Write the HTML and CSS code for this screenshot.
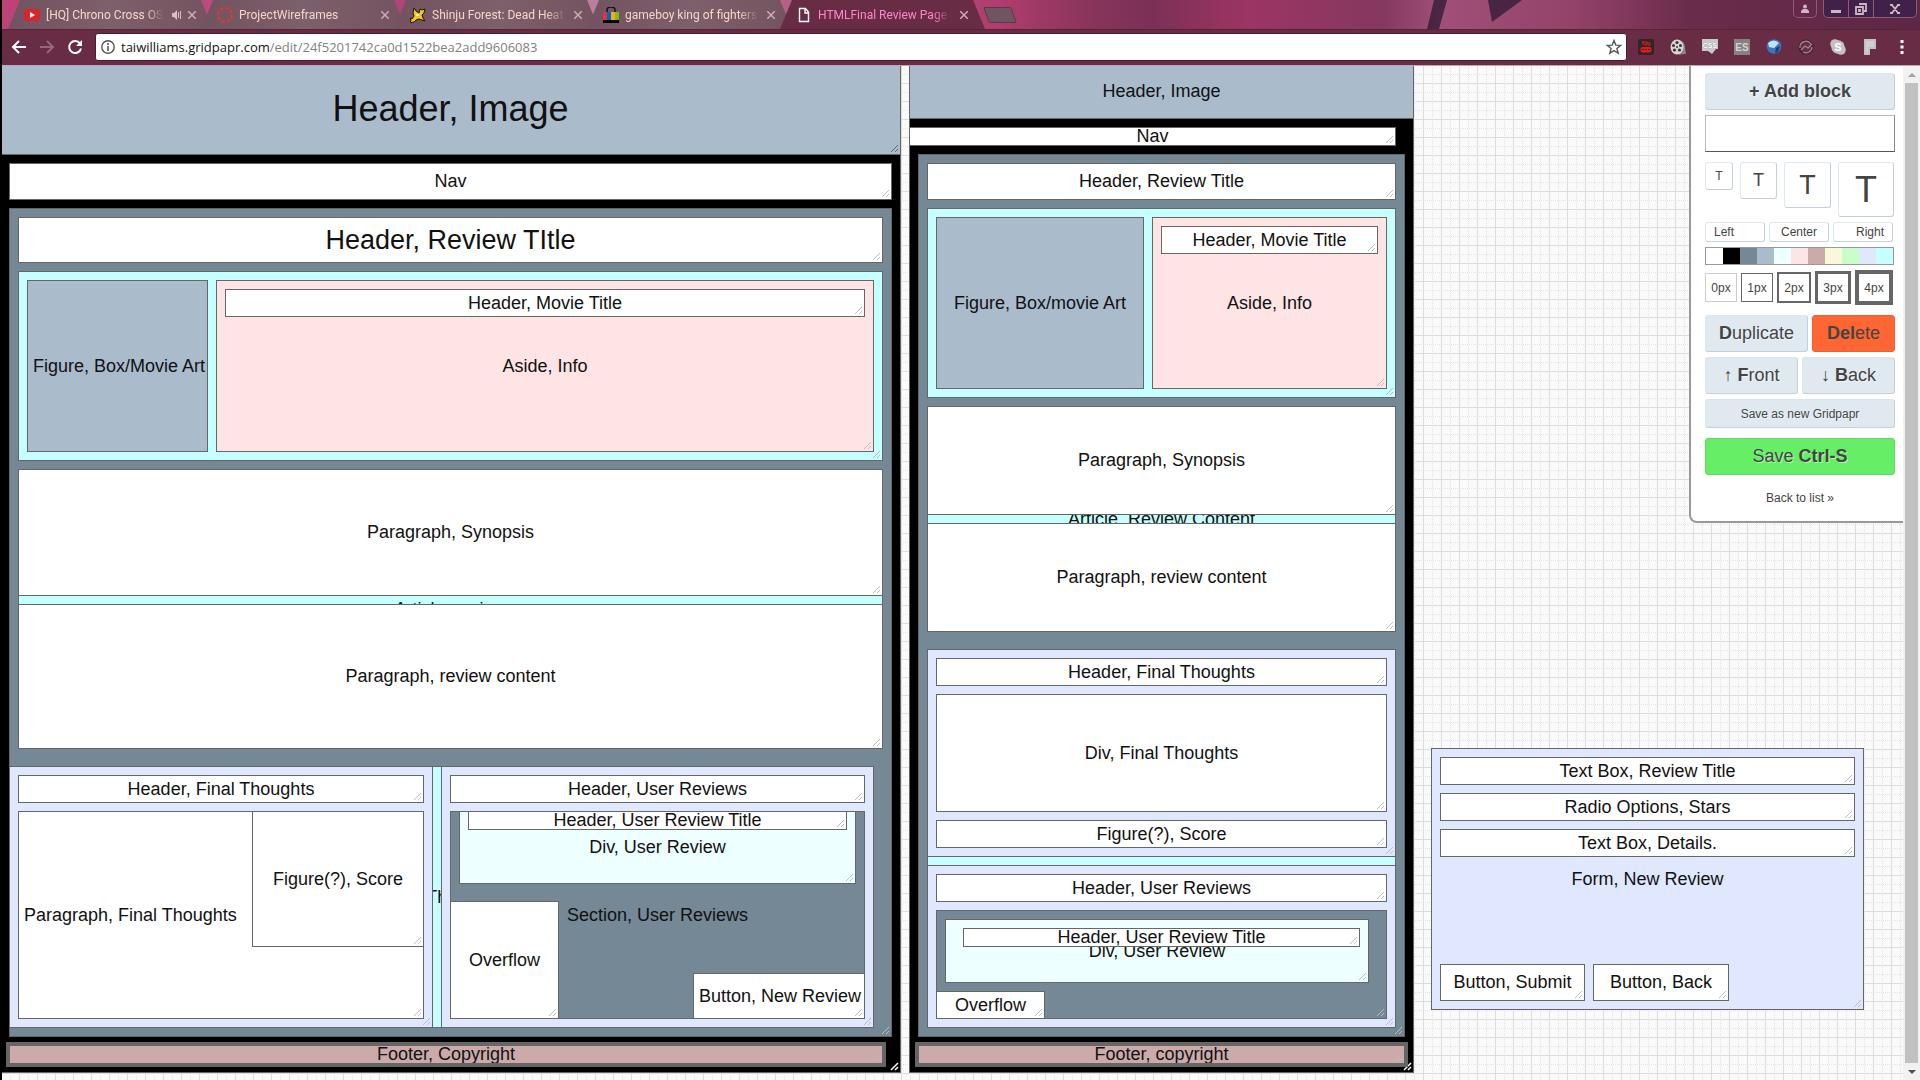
FILE: index.html
```html
<!DOCTYPE html>
<html lang="en">
<head>
<meta charset="utf-8">
<title>HTMLFinal Review Page | Gridpapr</title>
<link rel="stylesheet" href="styles.css">
</head>
<body>
<header class="browser">
  <div class="tabstrip">
    <svg class="theme-art" width="400" height="29" viewBox="0 0 400 29" aria-hidden="true"><path d="M32 0h13l-8 29H25zM86 0h34l-30 22z" fill="#351c38" opacity=".8"/></svg>
    <nav class="tabs" aria-label="Tabs">
      <div class="tab">
        <svg class="favicon" viewBox="0 0 16 16"><rect y="2" width="16" height="12" rx="3" fill="#d9252a"/><path d="M6 5l5 3-5 3z" fill="#fff"/></svg>
        <a class="tab-title" href="#">[HQ] Chrono Cross OST</a>
        <svg class="audio" width="10" height="10" viewBox="0 0 10 10"><path d="M0 3h2l3-3v10L2 7H0z" fill="#d8bfc0"/><path d="M6.500 2v6M8.500 1v8" stroke="#d8bfc0"/></svg>
        <button class="close" aria-label="Close tab"><svg viewBox="0 0 8 8"><path d="M0 0l8 8M8 0L0 8"/></svg></button>
      </div>
      <div class="tab">
        <svg class="favicon" viewBox="0 0 16 16"><circle cx="8" cy="8" r="7" fill="none" stroke="#e8382c" stroke-width="2" stroke-dasharray="3.500 2"/></svg>
        <a class="tab-title" href="#">ProjectWireframes</a>
        <button class="close" aria-label="Close tab"><svg viewBox="0 0 8 8"><path d="M0 0l8 8M8 0L0 8"/></svg></button>
      </div>
      <div class="tab">
        <svg class="favicon" viewBox="0 0 16 16"><path d="M4 1l2 3 3 2 1-4 2 1 3-1-1 4-2 2 1 3 2 3-3-1-3-1-3 1-2 2-5 1 2-2-1-3 2 1 2-3-1-3z" fill="#f2c81e" stroke="#1c1408" stroke-width="1"/><path d="M6 7h3v2H6z" fill="#fff6c0"/></svg>
        <a class="tab-title" href="#">Shinju Forest: Dead Heat</a>
        <button class="close" aria-label="Close tab"><svg viewBox="0 0 8 8"><path d="M0 0l8 8M8 0L0 8"/></svg></button>
      </div>
      <div class="tab">
        <svg class="favicon" viewBox="0 0 16 16"><path d="M4 5V3q0-3 4-3t4 3v2" fill="none" stroke="#111" stroke-width="1.500"/><path d="M0 5h4v8H0z" fill="#e53238"/><path d="M4 5h4v8H4z" fill="#0064d2"/><path d="M8 5h4v8H8z" fill="#f5af02"/><path d="M12 5h4v8h-4z" fill="#86b817"/><path d="M0 13h16v3H0z" fill="#000"/></svg>
        <a class="tab-title" href="#">gameboy king of fighters</a>
        <button class="close" aria-label="Close tab"><svg viewBox="0 0 8 8"><path d="M0 0l8 8M8 0L0 8"/></svg></button>
      </div>
      <div class="tab tab-active">
        <svg class="favicon" viewBox="0 0 16 16"><path d="M3.500 1.500h6l3 3.500v9.500h-9zM9 1.500V6h3.500" fill="none" stroke="#fff" stroke-width="1.400"/></svg>
        <a class="tab-title" href="#" aria-current="page">HTMLFinal Review Page | Grid</a>
        <button class="close" aria-label="Close tab"><svg viewBox="0 0 8 8"><path d="M0 0l8 8M8 0L0 8"/></svg></button>
      </div>
      <button class="new-tab" aria-label="New tab"></button>
    </nav>
    <div class="window-controls">
      <button class="profile" aria-label="Profile"><svg width="10" height="10" viewBox="0 0 10 10"><circle cx="5" cy="2.500" r="2" fill="#cdb6c4"/><path d="M1 9V7l2-2h4l2 2v2z" fill="#cdb6c4"/></svg></button>
      <div class="window-buttons">
        <button class="win" aria-label="Minimize"><svg width="12" height="12" viewBox="0 0 12 12"><path d="M1 7h10v3H1z" fill="#cdb6c4"/></svg></button>
        <button class="win" aria-label="Restore"><svg width="12" height="12" viewBox="0 0 12 12"><path d="M4 1h7v7H9M1 4h7v7H1zM4 7h1v1H4z" fill="none" stroke="#cdb6c4" stroke-width="1.800"/></svg></button>
        <button class="win win-close" aria-label="Close"><svg width="12" height="12" viewBox="0 0 12 12"><path d="M3 2l6 8M9 2L3 10M1 2h3M8 2h3M1 10h3M8 10h3" stroke="#cdb6c4" stroke-width="1.800"/></svg></button>
      </div>
    </div>
  </div>
  <div class="toolbar">
    <button class="tool" aria-label="Back"><svg width="16" height="16" viewBox="0 0 16 16"><path d="M15 8H2M8 2L2 8l6 6" fill="none" stroke="#fff" stroke-width="2"/></svg></button>
    <button class="tool" aria-label="Forward"><svg width="16" height="16" viewBox="0 0 16 16"><path d="M1 8h13M8 2l6 6-6 6" fill="none" stroke="#95687a" stroke-width="2"/></svg></button>
    <button class="tool" aria-label="Reload"><svg width="16" height="16" viewBox="0 0 16 16"><path d="M13 4.500A6 6 0 1 0 14 9.500" fill="none" stroke="#fff" stroke-width="2"/><path d="M15 1v6H9z" fill="#fff"/></svg></button>
    <div class="omnibox">
      <svg width="14" height="14" viewBox="0 0 14 14" aria-hidden="true"><circle cx="7" cy="7" r="6.200" fill="none" stroke="#555" stroke-width="1.400"/><path d="M7 6v5M7 3v2" stroke="#555" stroke-width="1.600"/></svg>
      <p class="url">taiwilliams.gridpapr.com<span class="url-path">/edit/24f5201742ca0d1522bea2add9606083</span></p>
      <button class="star" aria-label="Bookmark"><svg width="16" height="16" viewBox="0 0 16 16"><path d="M8 1.500l1.800 4.600 4.900.3-3.800 3.100 1.300 4.800L8 11.600l-4.200 2.700 1.300-4.800L1.300 6.400l4.900-.3z" fill="none" stroke="#555" stroke-width="1.400"/></svg></button>
    </div>
    <div class="extensions">
      <button class="ext" aria-label="Video downloader"><svg viewBox="0 0 16 16"><rect width="16" height="16" rx="2" fill="#2c2729"/><path d="M4 2l1 2 1-2M5 4v2M7 3h2v3H7zM10 3v3h2V3" fill="none" stroke="#e01b1b"/><rect x="2.500" y="8" width="11" height="5.500" rx="2" fill="#e01b1b"/><path d="M4 10.500h8" stroke="#5c1010" stroke-dasharray="2 1"/></svg></button>
      <button class="ext" aria-label="Film reel"><svg viewBox="0 0 16 16"><path d="M9 1q6 1 6 8l1 6h-3L9 16z" fill="#8d8688"/><ellipse cx="7" cy="8" rx="6.500" ry="7.500" fill="#d9d5d3"/><g fill="#3c3436"><circle cx="7" cy="3.500" r="1.600"/><circle cx="3.500" cy="6.500" r="1.500"/><circle cx="10.500" cy="6.500" r="1.500"/><circle cx="4.500" cy="11" r="1.600"/><circle cx="9.500" cy="11" r="1.600"/><circle cx="7" cy="8" r="1"/></g></svg></button>
      <button class="ext" aria-label="CSS viewer"><svg viewBox="0 0 16 16"><path d="M0 0h16v10h-2l-4 5-4-3H0z" fill="#c9c6c8"/><text x="8" y="9" text-anchor="middle" class="ext-css">CSS</text></svg></button>
      <button class="ext" aria-label="ES"><svg viewBox="0 0 16 16"><rect width="16" height="16" fill="#868284"/><text x="8" y="12" text-anchor="middle" class="ext-es">ES</text></svg></button>
      <button class="ext" aria-label="Globe"><svg viewBox="0 0 16 16"><circle cx="8" cy="7.500" r="7.300" fill="#3d74bd"/><path d="M2 4q6-5 11 0l-5 5-5-1z" fill="#c3e2f8"/><path d="M10 9l4-2-2 6-3 1z" fill="#173f84"/></svg></button>
      <button class="ext" aria-label="Swirl"><svg viewBox="0 0 16 16"><circle cx="8" cy="8" r="6.500" fill="none" stroke="#37262c" stroke-width="2"/><path d="M2 9a6 6 0 0 1 11-4M3 11l4-4 3 2 4-4M14 8a6 6 0 0 1-9 5" fill="none" stroke="#a3898f" stroke-width="1.200"/></svg></button>
      <button class="ext" aria-label="Skype"><svg viewBox="0 0 16 16"><circle cx="5" cy="5" r="4.800" fill="#c4bfc1"/><circle cx="11" cy="11" r="4.800" fill="#c4bfc1"/><circle cx="8" cy="8" r="6.700" fill="#c4bfc1"/><text x="8" y="12" text-anchor="middle" class="ext-skype">S</text></svg></button>
      <button class="ext" aria-label="Flag"><svg viewBox="0 0 16 16"><path d="M2 0h12v10H8v6H2z" fill="#c4c0c2"/><path d="M4 2h8v6H6v6H4z" fill="#d2ced0"/></svg></button>
      <button class="ext" aria-label="Menu"><svg viewBox="0 0 16 16"><path d="M6.500 1h3v3h-3zM6.500 6.500h3v3h-3zM6.500 12h3v3h-3z" fill="#fff"/></svg></button>
    </div>
  </div>
</header>

<main class="workspace">
  <section class="canvas" aria-label="Wireframe canvas">
    <!-- Desktop layout: --x, --y, --w and --h count 9px grid cells -->
    <div class="block black" style="--x:0;--y:0;--w:100;--h:112"></div>
    <div class="block steel text-xl" style="--x:0;--y:0;--w:100;--h:10">Header, Image</div>
    <div class="block" style="--x:1;--y:11;--w:98;--h:4">Nav</div>
    <div class="block slate" style="--x:1;--y:16;--w:98;--h:92"></div>
    <div class="block text-l" style="--x:2;--y:17;--w:96;--h:5">Header, Review TItle</div>
    <div class="block cyan" style="--x:2;--y:23;--w:96;--h:21"></div>
    <div class="block steel left" style="--x:3;--y:24;--w:20;--h:19">Figure, Box/Movie Art</div>
    <div class="block pink" style="--x:24;--y:24;--w:73;--h:19">Aside, Info</div>
    <div class="block" style="--x:25;--y:25;--w:71;--h:3">Header, Movie Title</div>
    <div class="block cyan" style="--x:2;--y:45;--w:96;--h:31">Article, review</div>
    <div class="block" style="--x:2;--y:45;--w:96;--h:14">Paragraph, Synopsis</div>
    <div class="block" style="--x:2;--y:60;--w:96;--h:16">Paragraph, review content</div>
    <div class="block cyan" style="--x:1;--y:78;--w:96;--h:29">Article, Thoughts...</div>
    <div class="block lavender" style="--x:1;--y:78;--w:47;--h:29"></div>
    <div class="block" style="--x:2;--y:79;--w:45;--h:3">Header, Final Thoughts</div>
    <div class="block left" style="--x:2;--y:83;--w:45;--h:23">Paragraph, Final Thoughts</div>
    <div class="block" style="--x:28;--y:83;--w:19;--h:15">Figure(?), Score</div>
    <div class="block lavender" style="--x:49;--y:78;--w:48;--h:29"></div>
    <div class="block" style="--x:50;--y:79;--w:46;--h:3">Header, User Reviews</div>
    <div class="block slate" style="--x:50;--y:83;--w:46;--h:23">Section, User Reviews</div>
    <div class="block mint" style="--x:51;--y:83;--w:44;--h:8">Div, User Review</div>
    <div class="block" style="--x:52;--y:83;--w:42;--h:2">Header, User Review Title</div>
    <div class="block" style="--x:50;--y:93;--w:12;--h:13">Overflow</div>
    <div class="block left" style="--x:77;--y:101;--w:19;--h:5">Button, New Review</div>
    <div class="block rose thick" style="--x:1;--y:109;--w:97;--h:2">Footer, Copyright</div>

    <!-- Tablet layout -->
    <div class="block black" style="--x:101;--y:0;--w:56;--h:112"></div>
    <div class="block steel" style="--x:101;--y:0;--w:56;--h:6">Header, Image</div>
    <div class="block" style="--x:101;--y:7;--w:54;--h:2">Nav</div>
    <div class="block slate" style="--x:102;--y:10;--w:54;--h:98"></div>
    <div class="block" style="--x:103;--y:11;--w:52;--h:4">Header, Review Title</div>
    <div class="block cyan" style="--x:103;--y:16;--w:52;--h:21"></div>
    <div class="block steel" style="--x:104;--y:17;--w:23;--h:19">Figure, Box/movie Art</div>
    <div class="block pink" style="--x:128;--y:17;--w:26;--h:19">Aside, Info</div>
    <div class="block" style="--x:129;--y:18;--w:24;--h:3">Header, Movie Title</div>
    <div class="block cyan" style="--x:103;--y:38;--w:52;--h:25">Article, Review Content</div>
    <div class="block" style="--x:103;--y:38;--w:52;--h:12">Paragraph, Synopsis</div>
    <div class="block" style="--x:103;--y:51;--w:52;--h:12">Paragraph, review content</div>
    <div class="block cyan" style="--x:103;--y:65;--w:52;--h:42"></div>
    <div class="block lavender" style="--x:103;--y:65;--w:52;--h:23"></div>
    <div class="block" style="--x:104;--y:66;--w:50;--h:3">Header, Final Thoughts</div>
    <div class="block" style="--x:104;--y:70;--w:50;--h:13">Div, Final Thoughts</div>
    <div class="block" style="--x:104;--y:84;--w:50;--h:3">Figure(?), Score</div>
    <div class="block lavender" style="--x:103;--y:89;--w:52;--h:18"></div>
    <div class="block" style="--x:104;--y:90;--w:50;--h:3">Header, User Reviews</div>
    <div class="block slate" style="--x:104;--y:94;--w:50;--h:12"></div>
    <div class="block mint" style="--x:105;--y:95;--w:47;--h:7">Div, User Review</div>
    <div class="block" style="--x:107;--y:96;--w:44;--h:2">Header, User Review Title</div>
    <div class="block" style="--x:104;--y:103;--w:12;--h:3">Overflow</div>
    <div class="block rose thick" style="--x:102;--y:109;--w:54;--h:2">Footer, copyright</div>

    <!-- New review form -->
    <div class="block lavender" style="--x:159;--y:76;--w:48;--h:29">Form, New Review</div>
    <div class="block" style="--x:160;--y:77;--w:46;--h:3">Text Box, Review Title</div>
    <div class="block" style="--x:160;--y:81;--w:46;--h:3">Radio Options, Stars</div>
    <div class="block" style="--x:160;--y:85;--w:46;--h:3">Text Box, Details.</div>
    <div class="block" style="--x:160;--y:100;--w:16;--h:4">Button, Submit</div>
    <div class="block" style="--x:177;--y:100;--w:15;--h:4">Button, Back</div>
  </section>

  <aside class="panel" aria-label="Block tools">
    <button class="btn add"><b>+ Add block</b></button>
    <input class="block-text" type="text" aria-label="Block text">
    <div class="row sizes">
      <button class="opt size-s">T</button>
      <button class="opt size-m">T</button>
      <button class="opt size-l">T</button>
      <button class="opt size-xl">T</button>
    </div>
    <div class="row aligns">
      <button class="opt align-left">Left</button>
      <button class="opt">Center</button>
      <button class="opt align-right">Right</button>
    </div>
    <div class="swatches">
      <button class="swatch" aria-label="White"></button>
      <button class="swatch black" aria-label="Black"></button>
      <button class="swatch slate" aria-label="Slate"></button>
      <button class="swatch steel" aria-label="Steel"></button>
      <button class="swatch mint" aria-label="Mint"></button>
      <button class="swatch pink" aria-label="Pink"></button>
      <button class="swatch rose" aria-label="Rose"></button>
      <button class="swatch cream" aria-label="Cream"></button>
      <button class="swatch green" aria-label="Green"></button>
      <button class="swatch lavender" aria-label="Lavender"></button>
      <button class="swatch cyan" aria-label="Cyan"></button>
    </div>
    <div class="row borders">
      <button class="edge edge-0">0px</button>
      <button class="edge edge-1">1px</button>
      <button class="edge edge-2">2px</button>
      <button class="edge edge-3">3px</button>
      <button class="edge edge-4">4px</button>
    </div>
    <div class="row actions">
      <button class="btn duplicate"><b>D</b>uplicate</button>
      <button class="btn delete"><b>Del</b>ete</button>
    </div>
    <div class="row actions">
      <button class="btn half">↑ <b>F</b>ront</button>
      <button class="btn half">↓ <b>B</b>ack</button>
    </div>
    <button class="btn save-as">Save as new Gridpapr</button>
    <button class="btn save">Save <b>Ctrl-S</b></button>
    <a class="back-link" href="#">Back to list »</a>
  </aside>

  <div class="scrollbar" aria-hidden="true">
    <span class="arrow arrow-up"></span>
    <span class="thumb"></span>
    <span class="arrow arrow-down"></span>
  </div>
</main>
</body>
</html>
```
FILE: styles.css
```css
* { box-sizing: border-box; }

body {
  margin: 0;
  height: 100vh;
  display: flex;
  flex-direction: column;
  overflow: hidden;
  border-left: 2px solid #000;
  font-family: "Liberation Sans", Arial, sans-serif;
  color: #444;
}

button { font: inherit; color: inherit; padding: 0; border: 0; background: none; }

/* Browser window */
.browser { font-family: Roboto, sans-serif; }

.tabstrip {
  position: relative;
  display: flex;
  justify-content: space-between;
  height: 29px;
  padding-left: 6px;
  background: linear-gradient(90deg, #bd4376 0, #c04a7e 11%, #b14478 21%, #b9809e 31%, #b03d6e 52%, #86345a 57%, #7c3055 60%, #9c3563 65%, #85385f 72%, #a05078 75%, #934268 82%, #6a2c4b 88%, #5e2745 100%);
}
.theme-art { position: absolute; top: 0; left: 73%; }
.tabs { display: flex; position: relative; }

.tab {
  display: flex;
  align-items: center;
  width: 205px;
  margin-right: -12px;
  padding: 0 17px 0 16px;
  background: linear-gradient(90deg, #725260, #7c606b 50%, #74535f);
  clip-path: polygon(0 100%, 12px 0, calc(100% - 12px) 0, 100% 100%);
  color: #f6d5c8;
}
.tab-active { background: #682c44; color: #ff86cc; }
.favicon { flex: none; width: 16px; height: 16px; margin-right: 6px; }
.tab-title {
  flex: 1;
  overflow: hidden;
  margin-right: 8px;
  color: inherit;
  font-size: 12px;
  line-height: 16px;
  white-space: nowrap;
  text-decoration: none;
  mask-image: linear-gradient(90deg, #000 85%, transparent);
}
.audio { flex: none; margin-right: 6px; }
.close { width: 8px; height: 8px; display: flex; stroke: #cfa9b4; stroke-width: 1.500; }
.close svg { width: 8px; height: 8px; }
.new-tab {
  align-self: center;
  width: 28px;
  height: 16px;
  margin-left: 13px;
  border: 1px solid #5a3a4a;
  border-radius: 2px;
  background: #6f5560;
  transform: skewX(20deg);
}

.window-controls { position: relative; display: flex; gap: 6px; height: 18px; padding-right: 3px; }
.profile, .window-buttons { border: 1px solid #8d5c79; border-top: 0; border-radius: 0 0 5px 5px; }
.profile { width: 24px; }
.window-buttons { display: flex; background: #41204a; overflow: hidden; }
.win { width: 25px; border-right: 1px solid #8d5c79; }
.win-close { width: 42px; border-right: 0; }
.win svg, .profile svg { display: block; margin: auto; }

.toolbar {
  display: flex;
  align-items: center;
  height: 37px;
  padding: 0 10px 2px 9px;
  border-top: 1px solid #56233a;
  border-bottom: 1px solid #c5a3b2;
  background: #682c44;
}
.tool { display: flex; width: 28px; }
.omnibox {
  flex: 1;
  display: flex;
  align-items: center;
  gap: 6px;
  height: 28px;
  padding: 0 4px 0 5px;
  border: 1px solid #4c1c30;
  border-radius: 3px;
  background: #fff;
}
.url { flex: 1; margin: 0; font: 13px/20px "Open Sans", sans-serif; color: #111; }
.url-path { color: #808080; }
.star { display: flex; }
.extensions { display: flex; gap: 16px; padding-left: 11px; }
.ext { display: flex; width: 16px; height: 16px; }
.ext svg { width: 16px; height: 16px; overflow: visible; }
.ext-css { font: bold 7px "Liberation Sans", sans-serif; fill: #fff; stroke: #8c878a; stroke-width: .5px; paint-order: stroke; }
.ext-es { font: bold 10px "Liberation Sans", sans-serif; fill: #d5d2d4; }
.ext-skype { font: bold 11px "Liberation Sans", sans-serif; fill: #fff; }

/* Workspace */
.workspace { position: relative; flex: 1; display: flex; min-height: 0; }

.canvas {
  --cell: 9px;
  position: relative;
  flex: 1;
  overflow: hidden;
  background: #fafafa url("data:image/svg+xml,%3Csvg xmlns='http://www.w3.org/2000/svg' width='18' height='18'%3E%3Cpath d='M0 .5h18M.5 0v18' stroke='%23ddd'/%3E%3Cpath d='M0 9.500h18M9.500 0v18' stroke='%23e2e2e2' stroke-dasharray='1 1'/%3E%3C/svg%3E") -1px -1px;
}

.block {
  position: absolute;
  left: calc(var(--x) * var(--cell) - 2px);
  top: calc(var(--y) * var(--cell) - 2px);
  width: calc(var(--w) * var(--cell) + 1px);
  height: calc(var(--h) * var(--cell) + 1px);
  display: flex;
  align-items: center;
  justify-content: center;
  overflow: hidden;
  resize: both;
  padding-bottom: 1px;
  border: 1px solid #666;
  background-color: #fff;
  color: #111;
  font-size: 18px;
  line-height: 20px;
  white-space: nowrap;
}
.block::-webkit-resizer {
  background: url("data:image/svg+xml,%3Csvg xmlns='http://www.w3.org/2000/svg' width='15' height='15'%3E%3Cpath d='M6 13l7-7M10 13l3-3' stroke='%23bbb'/%3E%3C/svg%3E") no-repeat right bottom;
}
.block.black::-webkit-resizer {
  background-image: url("data:image/svg+xml,%3Csvg xmlns='http://www.w3.org/2000/svg' width='15' height='15'%3E%3Cpath d='M6 13l7-7M10 13l3-3' stroke='%23fff' stroke-width='1.500'/%3E%3C/svg%3E");
}
.block.text-xl::-webkit-resizer {
  background-image: url("data:image/svg+xml,%3Csvg xmlns='http://www.w3.org/2000/svg' width='15' height='15'%3E%3Cpath d='M6 13l7-7M10 13l3-3' stroke='%23666'/%3E%3C/svg%3E");
}
.text-l { font-size: 27px; line-height: 30px; }
.text-xl { font-size: 36px; line-height: 42px; }
.left { justify-content: flex-start; padding-left: 5px; }
.thick { box-shadow: 0 0 0 3px #666; }

.black { background-color: #000; }
.slate { background-color: #748896; }
.steel { background-color: #abc; }
.mint { background-color: #eff; }
.pink { background-color: #fee4e4; }
.rose { background-color: #caa; }
.cream { background-color: #faf8da; }
.green { background-color: #c8ffc8; }
.lavender { background-color: #dfe8ff; }
.cyan { background-color: #c6ffff; }

/* Tool panel */
.panel {
  position: absolute;
  top: 0;
  right: 17px;
  width: 214px;
  display: flex;
  flex-direction: column;
  gap: 5px;
  padding: 7px 8px 16px 14px;
  border: 2px solid #999;
  border-width: 0 0 2px 2px;
  border-bottom-left-radius: 8px;
  background: #fff;
  font-size: 12px;
}
.row { display: flex; gap: 4px; }

.btn {
  height: 37px;
  border: 1px solid #dbe5ec;
  border-right-color: #c3d0da;
  border-bottom-color: #c3d0da;
  border-radius: 3px;
  background: #e0e9f0;
  font-size: 18px;
  text-shadow: 1px 1px 0 rgba(255, 255, 255, .5);
}
.block-text {
  height: 37px;
  border: 1px solid #bbb;
  border-right-color: #888;
  border-bottom-color: #555;
  font: inherit;
}

.opt {
  border: 1px solid #e0e9f0;
  border-right-color: #c3d0da;
  border-bottom-color: #c3d0da;
  border-radius: 3px;
  background: #fff;
}
.sizes { align-items: flex-start; gap: 7px; margin-top: 5px; }
.size-s { width: 28px; height: 28px; }
.size-m { width: 37px; height: 37px; font-size: 18px; }
.size-l { width: 47px; height: 46px; font-size: 27px; }
.size-xl { width: 56px; height: 55px; font-size: 36px; }

.aligns .opt { width: 60px; height: 20px; padding: 0 8px; }
.opt.align-left { text-align: left; }
.opt.align-right { text-align: right; }

.swatches { display: flex; width: 189px; height: 18px; border: 1px solid #999; }
.swatch { flex: 1; }

.borders { align-items: center; height: 35px; margin-bottom: 5px; }
.edge { flex: none; width: 32px; height: 29px; border: 1px solid #666; }
.edge-0 { border-color: #ccc; }
.edge-2 { width: 34px; height: 31px; border-width: 2px; }
.edge-3 { width: 36px; height: 33px; border-width: 3px; }
.edge-4 { width: 38px; height: 35px; border-width: 4px; }

.duplicate { width: 103px; }
.delete { flex: 1; border-color: #f0602f; background: #f63; text-shadow: none; }
.half { flex: 1; }
.save-as { height: 29px; font-size: 12px; }
.save { margin-top: 5px; border-color: #5fdc5f; background: #6e6; }
.back-link { margin-top: 11px; color: #444; line-height: 14px; text-align: center; text-decoration: none; }

/* Page scrollbar */
.scrollbar {
  display: flex;
  flex-direction: column;
  align-items: center;
  width: 17px;
  background: #f1f1f1;
}
.thumb { flex: 1; width: 13px; background: #c1c1c1; }
.arrow { width: 0; margin: 7px 0 6px; border: 4px solid transparent; border-top: 0; border-bottom-color: #a3a3a3; }
.arrow-down { border-top: 4px solid #505050; border-bottom: 0; }
```
